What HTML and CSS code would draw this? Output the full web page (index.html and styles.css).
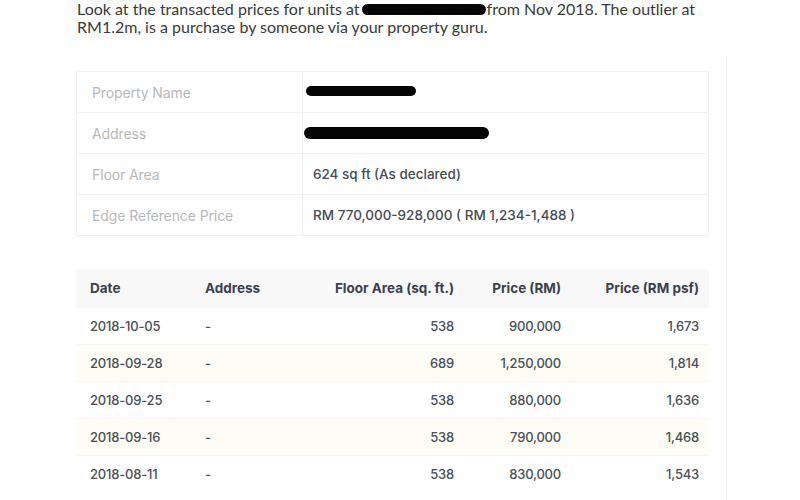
FILE: index.html
```html
<!DOCTYPE html>
<html>
<head>
<meta charset="utf-8">
<link rel="stylesheet" href="styles.css">
</head>
<body>
<div class="page">
  <p class="intro">Look at the transacted prices for units at<span class="redact redact-intro"></span>from Nov 2018. The outlier at<br>RM1.2m, is a purchase by someone via your property guru.</p>
  <div class="panel">
    <table class="info">
      <tr><td class="lbl">Property Name</td><td class="val"><span class="redact redact-name"></span></td></tr>
      <tr><td class="lbl">Address</td><td class="val"><span class="redact redact-addr"></span></td></tr>
      <tr><td class="lbl">Floor Area</td><td class="val">624 sq ft (As declared)</td></tr>
      <tr><td class="lbl">Edge Reference Price</td><td class="val">RM 770,000-928,000 ( RM 1,234-1,488 )</td></tr>
    </table>
    <table class="tx">
      <thead>
        <tr><th>Date</th><th>Address</th><th class="num">Floor Area (sq. ft.)</th><th class="num">Price (RM)</th><th class="num">Price (RM psf)</th></tr>
      </thead>
      <tbody>
        <tr><td>2018-10-05</td><td>-</td><td class="num">538</td><td class="num">900,000</td><td class="num">1,673</td></tr>
        <tr class="alt"><td>2018-09-28</td><td>-</td><td class="num">689</td><td class="num">1,250,000</td><td class="num">1,814</td></tr>
        <tr><td>2018-09-25</td><td>-</td><td class="num">538</td><td class="num">880,000</td><td class="num">1,636</td></tr>
        <tr class="alt"><td>2018-09-16</td><td>-</td><td class="num">538</td><td class="num">790,000</td><td class="num">1,468</td></tr>
        <tr><td>2018-08-11</td><td>-</td><td class="num">538</td><td class="num">830,000</td><td class="num">1,543</td></tr>
      </tbody>
    </table>
  </div>
</div>
</body>
</html>
```
FILE: styles.css
```css
html, body {
  margin: 0;
  padding: 0;
  background: #ffffff;
}
.page {
  width: 800px;
  height: 500px;
  overflow: hidden;
}
.intro {
  margin: 0;
  padding: 0 0 0 77px;
  font-family: Lato, "Liberation Sans", sans-serif;
  font-size: 16px;
  line-height: 18px;
  color: #3a3a3a;
}
.redact {
  display: inline-block;
  background: #050505;
  border-radius: 8px;
  vertical-align: middle;
}
.redact-intro {
  width: 124px;
  height: 11px;
  margin: -3px 1px 0 2px;
}
.panel {
  margin: 20px 0 0 62px;
  width: 665px;
  height: 470px;
  border-right: 1px solid #f3f3f3;
  padding: 15px 0 0 14px;
  box-sizing: border-box;
}
table {
  border-collapse: collapse;
  width: 633px;
  font-family: Inter, "Open Sans", sans-serif;
}
.info td {
  border: 1px solid #f2f2f2;
  height: 40px;
  padding: 0;
  vertical-align: middle;
}
.info .lbl {
  width: 210px;
  padding-left: 15px;
  color: #b9b9b9;
  font-size: 14px;
  font-weight: 400;
  letter-spacing: -0.1px;
}
.info .val {
  padding-left: 10px;
  color: #454b57;
  font-size: 13.5px;
  font-weight: 500;
  letter-spacing: 0;
}
.redact-name {
  width: 110px;
  height: 10px;
  margin-left: -7px;
  margin-top: -4px;
}
.redact-addr {
  width: 185px;
  height: 12px;
  margin-left: -9px;
  margin-top: -2px;
}
.tx {
  margin-top: 33px;
}
.tx th {
  background: #f8f8f8;
  height: 38px;
  color: #3b4150;
  font-size: 13.5px;
  font-weight: 700;
  text-align: left;
  padding: 0;
}
.tx td {
  height: 36px;
  color: #4a4f5a;
  font-size: 13px;
  font-weight: 500;
  letter-spacing: -0.2px;
  padding: 0;
  border-top: 1px solid #f6f6f6;
}
.tx tr.alt td {
  background: #fdfdf5;
}
.tx th:first-child, .tx td:first-child {
  padding-left: 14px;
  width: 115px;
}
.tx th:nth-child(2), .tx td:nth-child(2) {
  width: 89px;
}
.tx .num {
  text-align: right;
}
.tx th:nth-child(3), .tx td:nth-child(3) {
  width: 160px;
}
.tx th:nth-child(4), .tx td:nth-child(4) {
  width: 107px;
}
.tx th:nth-child(5), .tx td:nth-child(5) {
  padding-right: 10px;
}
```
